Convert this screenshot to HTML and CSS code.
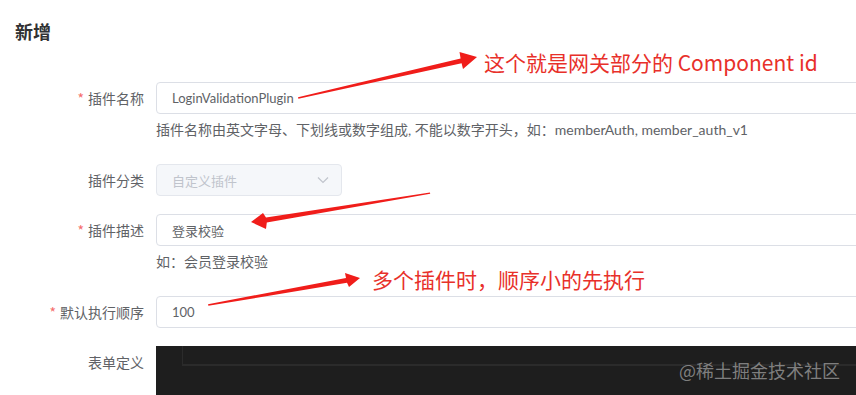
FILE: index.html
```html
<!DOCTYPE html>
<html lang="zh-CN">
<head>
<meta charset="utf-8">
<title>新增</title>
<link rel="stylesheet" href="styles.css">
</head>
<body>
<div class="page">
  <h2 class="title">新增</h2>
  <div class="form">
    <div class="item item-help">
      <div class="label"><span class="star">*</span>插件名称</div>
      <div class="content">
        <div class="input"><span class="val">LoginValidationPlugin</span></div>
        <div class="help">插件名称由英文字母、下划线或数字组成, 不能以数字开头，如：memberAuth, member_auth_v1</div>
      </div>
    </div>
    <div class="item">
      <div class="label">插件分类</div>
      <div class="content">
        <div class="select">
          <span class="placeholder">自定义插件</span>
          <svg class="chev" width="12" height="8" viewBox="0 0 12 8"><path d="M1 1.5 L6 6.5 L11 1.5" fill="none" stroke="#c0c4cc" stroke-width="1.2"/></svg>
        </div>
      </div>
    </div>
    <div class="item item-help">
      <div class="label"><span class="star">*</span>插件描述</div>
      <div class="content">
        <div class="input"><span class="val">登录校验</span></div>
        <div class="help">如：会员登录校验</div>
      </div>
    </div>
    <div class="item">
      <div class="label"><span class="star">*</span>默认执行顺序</div>
      <div class="content">
        <div class="input"><span class="val">100</span></div>
      </div>
    </div>
    <div class="item">
      <div class="label">表单定义</div>
      <div class="content">
        <div class="editor">
          <div class="gutter"></div>
          <div class="lines"><div class="curline"></div></div>
        </div>
      </div>
    </div>
  </div>

  <svg class="arrows" width="856" height="395" viewBox="0 0 856 395">
    <polygon points="298,97.3 460.6,58.4 459.5,52 477,57 463,69 461.6,63.2 298.4,98.8" fill="#f01d1a"/>
    <polygon points="430,192.4 266,217.4 263,213 251,222 266,229 266.8,222.6 430.2,193.8" fill="#f01d1a"/>
    <polygon points="208,304.2 346,277.9 345,273 360,278 349,287 347,282.8 208.4,305.8" fill="#f01d1a"/>
  </svg>
  <div class="note note-1">这个就是网关部分的 Component id</div>
  <div class="note note-2">多个插件时，顺序小的先执行</div>
  <div class="watermark">@稀土掘金技术社区</div>
</div>
</body>
</html>
```
FILE: styles.css
```css
html, body {
  margin: 0;
  padding: 0;
  background: #ffffff;
  overflow: hidden;
}
body {
  font-family: "Noto Sans", "Noto Sans CJK SC", sans-serif;
  color: #606266;
}
.page {
  position: relative;
  width: 856px;
  height: 395px;
  overflow: hidden;
}
.title {
  margin: 0;
  padding: 19px 0 0 15px;
  font-size: 18px;
  line-height: 24px;
  font-weight: 700;
  color: #303133;
  font-family: "Noto Sans CJK SC", sans-serif;
}
.form {
  margin-top: 39px;
  width: 1100px;
  display: flex;
  flex-direction: column;
}
.item {
  display: flex;
  margin-bottom: 18px;
}
.item-help {
  margin-bottom: 24px;
}
.label {
  width: 156px;
  box-sizing: border-box;
  padding-right: 12px;
  text-align: right;
  font-size: 14px;
  line-height: 32px;
  color: #606266;
  font-family: "Noto Sans CJK SC", sans-serif;
  flex-shrink: 0;
}
.star {
  color: #f56c6c;
  margin-right: 4px;
}
.content {
  flex: 1;
}
.input {
  height: 32px;
  box-sizing: border-box;
  border: 1px solid #dcdfe6;
  border-radius: 4px;
  padding: 0 15px;
  display: flex;
  align-items: center;
  font-family: "Lato", "Noto Sans CJK SC", sans-serif;
  font-size: 13px;
  color: #606266;
}
.help {
  margin-top: 6px;
  font-family: "Lato", "Noto Sans CJK SC", sans-serif;
  font-size: 14px;
  line-height: 20px;
  color: #606266;
}
.select {
  width: 186px;
  height: 32px;
  box-sizing: border-box;
  border: 1px solid #e4e7ed;
  border-radius: 4px;
  background: #f5f7fa;
  padding: 0 12px 0 15px;
  display: flex;
  align-items: center;
  justify-content: space-between;
  font-size: 13px;
  color: #c0c4cc;
}
.editor {
  height: 80px;
  background: #1e1e1e;
  display: flex;
}
.gutter {
  width: 26px;
  flex-shrink: 0;
}
.lines {
  flex: 1;
}
.curline {
  height: 18px;
  border-left: 1px solid #2b2b2b;
  border-bottom: 2px solid #2b2b2b;
}
.arrows {
  position: absolute;
  left: 0;
  top: 0;
}
.note {
  position: absolute;
  font-family: "Noto Sans CJK SC", sans-serif;
  font-size: 21px;
  line-height: 28px;
  color: #e8302a;
  white-space: nowrap;
}
.note-1 {
  left: 484px;
  top: 48px;
}
.note-2 {
  left: 372px;
  top: 265px;
}
.watermark {
  position: absolute;
  left: 679px;
  top: 358px;
  font-family: "Noto Sans CJK SC", sans-serif;
  font-size: 18px;
  line-height: 24px;
  color: rgba(170, 170, 170, 0.7);
  white-space: nowrap;
}
```
